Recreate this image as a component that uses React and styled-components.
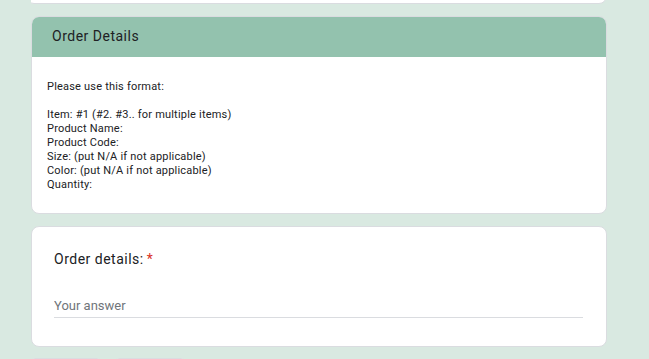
import styled, { createGlobalStyle } from "styled-components"

const GlobalStyle = createGlobalStyle`
    html, body {
        margin: 0;
        padding: 0;
        background-color: #d9e9e1;
        font-family: Roboto, "Liberation Sans", Arial, sans-serif;
        color: #202124;
    }
`

const Page = styled.div`
    width: 576px;
    margin-left: 31px;
    display: flex;
    flex-direction: column;
    gap: 12px;
    height: 359px;
    overflow: hidden;
`

const Card = styled.div`
    background-color: #fff;
    border: 1px solid #dadce0;
    border-radius: 8px;
    box-sizing: border-box;
    overflow: hidden;
    flex-shrink: 0;
`

const PrevCard = styled(Card)`
    margin-top: -40px;
    margin-left: -5px;
    height: 44px;
`

const SectionHeader = styled.div`
    background-color: #93c2ae;
    height: 41px;
    display: flex;
    align-items: center;
    padding-left: 21px;
    padding-bottom: 1px;
    box-sizing: border-box;
    font-size: 14px;
    letter-spacing: 0.5px;
    color: #202124;
    margin: -1px -1px 0 -1px;
`

const SectionBody = styled.div`
    padding: 23px 16px 21px 15px;
    font-size: 11px;
    line-height: 14px;
    letter-spacing: 0.2px;
    color: #202124;
`

const Line = styled.div`
    min-height: 14px;
`

const QuestionCard = styled(Card)`
    height: 121px;
    padding: 22px 23px 0 22px;
`

const QuestionTitle = styled.div`
    font-size: 14px;
    line-height: 20px;
    letter-spacing: 0.5px;
    color: #202124;
`

const Required = styled.span`
    color: #d93025;
    margin-left: 3px;
`

const AnswerInput = styled.input`
    display: block;
    width: 100%;
    box-sizing: border-box;
    margin-top: 28px;
    border: none;
    border-bottom: 1px solid #dadce0;
    padding: 0 0 2px 0;
    font-family: Roboto, "Liberation Sans", Arial, sans-serif;
    font-size: 13px;
    line-height: 18px;
    color: #202124;
    background: transparent;
    outline: none;
    &::placeholder {
        color: #70757a;
    }
`

const ButtonRow = styled.div`
    display: flex;
    gap: 14px;
    margin-top: -1px;
`

const NavButton = styled.div`
    width: 70px;
    height: 36px;
    background-color: #fff;
    border-radius: 4px;
    border: 1px solid #dadce0;
    box-sizing: border-box;
`

const formatLines = [
    "Please use this format:",
    "",
    "Item: #1 (#2. #3.. for multiple items)",
    "Product Name:",
    "Product Code:",
    "Size: (put N/A if not applicable)",
    "Color: (put N/A if not applicable)",
    "Quantity:",
]

export default function App() {
    return (
        <>
            <GlobalStyle />
            <Page>
                <PrevCard />
                <Card>
                    <SectionHeader>Order Details</SectionHeader>
                    <SectionBody>
                        {formatLines.map((text, i) => (
                            <Line key={i}>{text}</Line>
                        ))}
                    </SectionBody>
                </Card>
                <QuestionCard>
                    <QuestionTitle>
                        Order details:<Required>*</Required>
                    </QuestionTitle>
                    <AnswerInput type="text" placeholder="Your answer" />
                </QuestionCard>
                <ButtonRow>
                    <NavButton />
                    <NavButton />
                </ButtonRow>
            </Page>
        </>
    )
}
